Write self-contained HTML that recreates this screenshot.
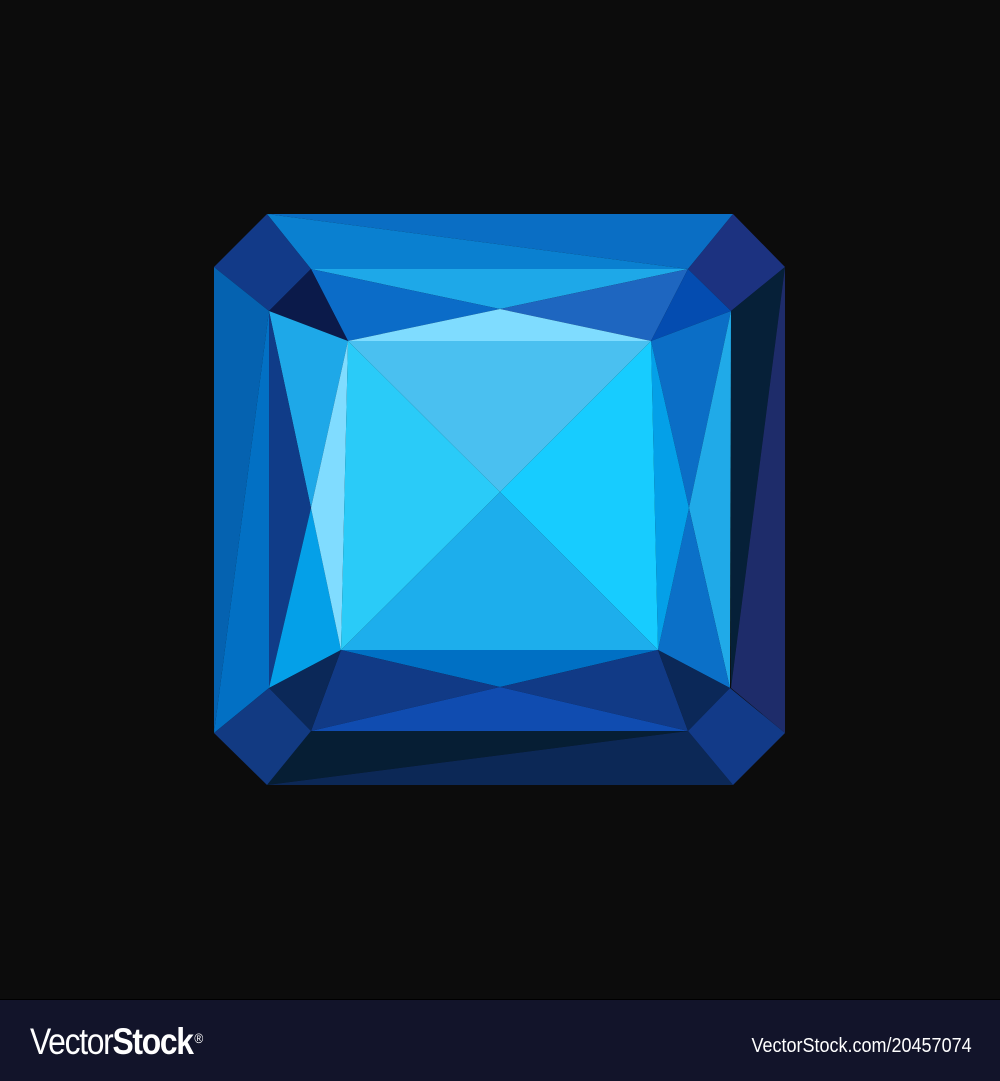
<!DOCTYPE html>
<html><head><style>
body{margin:0;width:1000px;height:1080px;background:#0c0c0c;overflow:hidden;position:relative;font-family:"Liberation Sans",sans-serif}
.f{position:absolute;left:0;top:999px;width:1000px;height:81px;background:#12142a;border-top:1px solid #000}
.logo{position:absolute;left:30px;top:20px;color:#fff;font-size:37px;letter-spacing:-1.5px;line-height:44px;white-space:nowrap;transform:scaleX(.86);transform-origin:left}
.r{position:absolute;right:28px;top:35px;color:#fff;font-size:20px;transform:scaleX(.9);transform-origin:right;white-space:nowrap}
</style></head><body>
<svg width="1000" height="1000" style="position:absolute;left:0;top:0">
<polygon points="267,214 733,214 688,269" fill="#0a6ec4"/>
<polygon points="267,214 688,269 311,269" fill="#0a80d0"/>
<polygon points="311,269 688,269 500,309" fill="#1ea8e8"/>
<polygon points="311,269 500,309 348,341" fill="#0b6cc8"/>
<polygon points="688,269 651,341 500,309" fill="#1e66c0"/>
<polygon points="214,267 267,214 311,269 269,311" fill="#123a88"/>
<polygon points="269,311 311,269 348,341" fill="#0b1a4a"/>
<polygon points="733,214 785,267 731,311 688,269" fill="#1c3280"/>
<polygon points="688,269 731,311 651,341" fill="#044cb0"/>
<polygon points="785,267 731,311 731,688" fill="#062038"/>
<polygon points="785,267 731,688 785,733" fill="#1e2c6a"/>
<polygon points="731,311 651,341 689,508" fill="#0b6ec6"/>
<polygon points="731,311 689,508 730,688" fill="#20aae8"/>
<polygon points="689,508 730,688 658,650" fill="#0b70c8"/>
<polygon points="651,341 689,508 658,650" fill="#04a0e8"/>
<polygon points="214,267 269,311 214,733" fill="#0562b0"/>
<polygon points="269,311 269,688 214,733" fill="#0270c4"/>
<polygon points="269,311 348,341 311,508" fill="#1ea8e8"/>
<polygon points="269,311 311,508 269,688" fill="#103c88"/>
<polygon points="311,508 269,688 341,650" fill="#04a0e8"/>
<polygon points="348,341 311,508 341,650" fill="#80dcff"/>
<polygon points="348,341 500,309 651,341" fill="#7fdcff"/>
<polygon points="348,341 651,341 500,492" fill="#4ac0f0"/>
<polygon points="651,341 658,650 500,492" fill="#17ccff"/>
<polygon points="348,341 341,650 500,492" fill="#2acbf8"/>
<polygon points="341,650 658,650 500,492" fill="#1daeec"/>
<polygon points="341,650 658,650 500,687" fill="#0070c4"/>
<polygon points="341,650 500,687 311,731" fill="#113a86"/>
<polygon points="658,650 688,731 500,687" fill="#113a86"/>
<polygon points="311,731 500,687 688,731" fill="#104cb0"/>
<polygon points="269,688 341,650 311,731" fill="#0b2858"/>
<polygon points="658,650 730,688 688,731" fill="#0b2858"/>
<polygon points="311,731 688,731 267,785" fill="#061e34"/>
<polygon points="688,731 733,785 267,785" fill="#0c2856"/>
<polygon points="214,733 269,688 311,731 267,785" fill="#123a82"/>
<polygon points="785,733 733,785 688,731 730,688" fill="#123a88"/>
</svg>
<div class="f">
<div class="logo"><span>Vector</span><b>Stock</b><span style="font-size:14px;vertical-align:top;position:relative;top:-4px;margin-left:2px">®</span></div>
<div class="r">VectorStock.com/20457074</div>
</div>
</body></html>
